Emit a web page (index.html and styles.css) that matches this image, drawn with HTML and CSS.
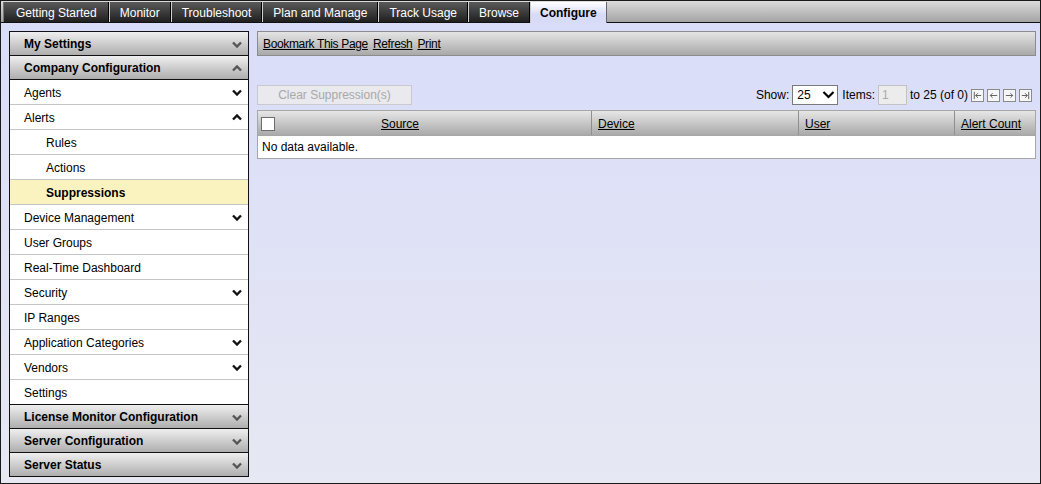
FILE: index.html
```html
<!DOCTYPE html>
<html>
<head>
<meta charset="utf-8">
<link rel="stylesheet" href="styles.css">
</head>
<body>
<div class="app">
  <div class="tabbar">
    <div class="tab">Getting Started</div>
    <div class="tab">Monitor</div>
    <div class="tab">Troubleshoot</div>
    <div class="tab">Plan and Manage</div>
    <div class="tab">Track Usage</div>
    <div class="tab">Browse</div>
    <div class="tab active">Configure</div>
  </div>
  <div class="content">
    <div class="sidebar">
      <div class="sec-head">My Settings<svg class="chev" viewBox="0 0 10 6"><path d="M1 1 L5 5 L9 1" /></svg></div>
      <div class="sec-head">Company Configuration<svg class="chev" viewBox="0 0 10 6"><path d="M1 5 L5 1 L9 5" /></svg></div>
      <div class="item">Agents<svg class="chev dark" viewBox="0 0 10 6"><path d="M1 1 L5 5 L9 1" /></svg></div>
      <div class="item">Alerts<svg class="chev dark" viewBox="0 0 10 6"><path d="M1 5 L5 1 L9 5" /></svg></div>
      <div class="item sub">Rules</div>
      <div class="item sub">Actions</div>
      <div class="item sub selected">Suppressions</div>
      <div class="item">Device Management<svg class="chev dark" viewBox="0 0 10 6"><path d="M1 1 L5 5 L9 1" /></svg></div>
      <div class="item">User Groups</div>
      <div class="item">Real-Time Dashboard</div>
      <div class="item">Security<svg class="chev dark" viewBox="0 0 10 6"><path d="M1 1 L5 5 L9 1" /></svg></div>
      <div class="item">IP Ranges</div>
      <div class="item">Application Categories<svg class="chev dark" viewBox="0 0 10 6"><path d="M1 1 L5 5 L9 1" /></svg></div>
      <div class="item">Vendors<svg class="chev dark" viewBox="0 0 10 6"><path d="M1 1 L5 5 L9 1" /></svg></div>
      <div class="item last">Settings</div>
      <div class="sec-head">License Monitor Configuration<svg class="chev" viewBox="0 0 10 6"><path d="M1 1 L5 5 L9 1" /></svg></div>
      <div class="sec-head">Server Configuration<svg class="chev" viewBox="0 0 10 6"><path d="M1 1 L5 5 L9 1" /></svg></div>
      <div class="sec-head">Server Status<svg class="chev" viewBox="0 0 10 6"><path d="M1 1 L5 5 L9 1" /></svg></div>
    </div>
    <div class="main">
      <div class="toolbar">
        <a href="#">Bookmark This Page</a>
        <a href="#">Refresh</a>
        <a href="#">Print</a>
      </div>
      <div class="controls">
        <button class="clear-btn" disabled>Clear Suppression(s)</button>
        <div class="pager">
          <span>Show:</span>
          <div class="select">25<svg viewBox="0 0 12 8"><path d="M1 1 L6 6 L11 1" /></svg></div>
          <span>Items:</span>
          <div class="items-input">1</div>
          <span>to 25 (of 0)</span>
          <div class="pbtns">
            <span class="pbtn"><svg viewBox="0 0 12 12"><path d="M2.5 2 V10 M10 6 H4 M6.5 3.5 L4 6 L6.5 8.5" /></svg></span>
            <span class="pbtn"><svg viewBox="0 0 12 12"><path d="M10 6 H2.5 M5 3.5 L2.5 6 L5 8.5" /></svg></span>
            <span class="pbtn"><svg viewBox="0 0 12 12"><path d="M2 6 H9.5 M7 3.5 L9.5 6 L7 8.5" /></svg></span>
            <span class="pbtn"><svg viewBox="0 0 12 12"><path d="M9.5 2 V10 M2 6 H8 M5.5 3.5 L8 6 L5.5 8.5" /></svg></span>
          </div>
        </div>
      </div>
      <div class="grid">
        <div class="grid-head">
          <div class="col c-src"><span class="cb"></span><a href="#">Source</a></div>
          <div class="col c-dev"><a href="#">Device</a></div>
          <div class="col c-user"><a href="#">User</a></div>
          <div class="col c-cnt"><a href="#">Alert Count</a></div>
        </div>
        <div class="grid-row">No data available.</div>
      </div>
    </div>
  </div>
</div>
</body>
</html>
```
FILE: styles.css
```css
* { box-sizing: border-box; }
html, body { margin: 0; padding: 0; }
body {
  font-family: "Liberation Sans", Arial, sans-serif;
  font-size: 12px;
  color: #000;
}
.app {
  width: 1041px;
  height: 484px;
  border: 1px solid #1a1a1a;
  display: flex;
  flex-direction: column;
  background: linear-gradient(#d9dcfa, #e6e8f2);
  overflow: hidden;
}
.tabbar {
  height: 22px;
  flex: none;
  display: flex;
  align-items: flex-end;
  padding-left: 2px;
  background: linear-gradient(#dcdcdc, #a3a3a3);
  border-bottom: 1px solid #111;
}
.tab {
  height: 20px;
  line-height: 22px;
  padding: 0 10px;
  color: #fff;
  background: linear-gradient(#5a5a5a, #1f1f1f);
  border-left: 1px solid #d0d0d0;
  border-right: 1px solid #000;
  white-space: nowrap;
  overflow: hidden;
}
.tab:first-child { border-left: 1px solid #777; padding: 0 11px 0 12px; }
.tab.active {
  color: #000;
  font-weight: bold;
  background: linear-gradient(#ffffff, #d8dbf8 60%, #d8dbf8);
  border-left: 1px solid #ccc;
  border-right: 1px solid #666;
  height: 21px;
  line-height: 23px;
  margin-bottom: -1px;
  padding: 0 9px;
}
.content {
  flex: 1;
  display: flex;
  gap: 8px;
  padding: 8px 4px 0 8px;
  min-height: 0;
}
.sidebar {
  width: 240px;
  flex: none;
  align-self: flex-start;
  border: 1px solid #111;
  border-bottom: none;
  background: #fff;
}
.sec-head {
  height: 24px;
  display: flex;
  align-items: center;
  justify-content: space-between;
  padding: 1px 6px 0 14px;
  font-weight: bold;
  background: linear-gradient(#efefef, #aeaeae);
  border-bottom: 1px solid #111;
}
.item {
  height: 25px;
  display: flex;
  align-items: center;
  justify-content: space-between;
  padding: 1px 6px 0 14px;
  border-bottom: 1px solid #c6c6c6;
  background: #fff;
}
.item.sub { padding-left: 36px; }
.item.selected { background: #fbf3bf; font-weight: bold; }
.item.last { border-bottom: 1px solid #111; }
.chev {
  width: 10px;
  height: 7px;
  fill: none;
  stroke: #555;
  stroke-width: 2.4;
}
.chev.dark { stroke: #111; }
.main {
  flex: 1;
  display: flex;
  flex-direction: column;
  min-width: 0;
}
.toolbar {
  height: 25px;
  display: flex;
  align-items: center;
  gap: 5px;
  padding: 1px 0 0 5px;
  border: 1px solid #8c8c8c;
  background: linear-gradient(#e4e4e4, #a9a9a9);
}
.toolbar a {
  color: #000;
  text-decoration: underline;
  letter-spacing: -0.35px;
}
.grid-head a {
  color: #000;
  text-decoration: underline;
}
.controls {
  margin-top: 29px;
  height: 20px;
  display: flex;
  justify-content: space-between;
  align-items: center;
}
.clear-btn {
  width: 155px;
  height: 20px;
  font-family: inherit;
  font-size: 12px;
  color: #a8a8a8;
  background: #e9e9ee;
  border: 1px solid #c9c9cc;
  padding: 0;
}
.pager {
  display: flex;
  align-items: center;
  gap: 3px;
  padding-right: 4px;
}
.select {
  width: 46px;
  height: 20px;
  background: #fff;
  border: 1px solid #7a7a7a;
  display: flex;
  align-items: center;
  justify-content: space-between;
  padding: 0 2px 0 4px;
  margin-right: 1px;
}
.select svg {
  width: 13px;
  height: 8px;
  fill: none;
  stroke: #000;
  stroke-width: 2.2;
}
.items-input {
  width: 29px;
  height: 20px;
  background: #ececec;
  border: 1px solid #c2c2c2;
  color: #aaa;
  padding-left: 3px;
  line-height: 18px;
}
.pbtns {
  display: flex;
  gap: 3px;
  margin-left: 0;
}
.pbtn {
  width: 13px;
  height: 13px;
  border: 1px solid #8a8a8a;
  background: #f6f6f6;
  display: flex;
  align-items: center;
  justify-content: center;
}
.pbtn svg {
  width: 11px;
  height: 11px;
  fill: none;
  stroke: #555;
  stroke-width: 1;
}
.grid {
  margin-top: 5px;
  border: 1px solid #a6a6a6;
  background: #fff;
}
.grid-head {
  height: 25px;
  display: flex;
  background: linear-gradient(#e6e6e6, #a9a9a9);
  border-bottom: 1px solid #a6a6a6;
}
.col {
  display: flex;
  align-items: center;
  padding: 1px 0 0 6px;
  border-left: 1px solid #8f8f8f;
}
.c-src {
  width: 333px;
  border-left: none;
  padding-left: 3px;
}
.c-src a { margin-left: 106px; }
.cb {
  width: 14px;
  height: 14px;
  background: #fff;
  border: 1px solid #6d6d6d;
}
.c-dev { width: 207px; }
.c-user { width: 156px; }
.c-cnt { flex: 1; }
.grid-row {
  height: 22px;
  line-height: 22px;
  padding-left: 4px;
}
```
